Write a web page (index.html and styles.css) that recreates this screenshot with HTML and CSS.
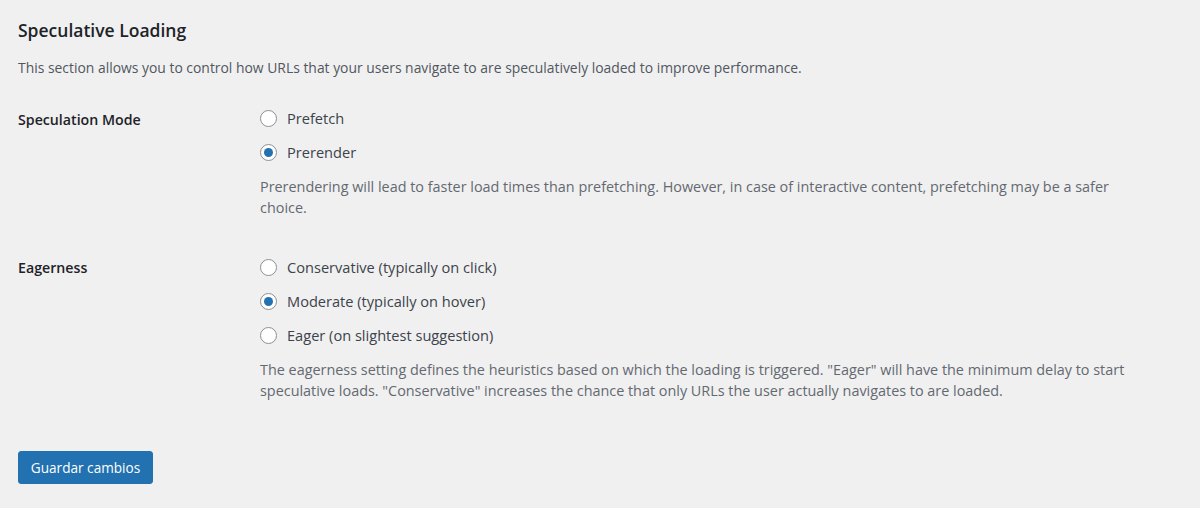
FILE: index.html
```html
<!DOCTYPE html>
<html lang="en">
<head>
<meta charset="utf-8">
<title>Speculative Loading</title>
<link rel="stylesheet" href="styles.css">
</head>
<body>
<div class="wrap">
  <h2 class="title">Speculative Loading</h2>
  <p class="intro">This section allows you to control how URLs that your users navigate to are speculatively loaded to improve performance.</p>

  <div class="form-row row-mode">
    <div class="label">Speculation Mode</div>
    <div class="field">
      <label class="opt"><span class="radio"></span>Prefetch</label>
      <label class="opt"><span class="radio checked"></span>Prerender</label>
      <p class="help">Prerendering will lead to faster load times than prefetching. However, in case of interactive content, prefetching may be a safer choice.</p>
    </div>
  </div>

  <div class="form-row row-eager">
    <div class="label">Eagerness</div>
    <div class="field">
      <label class="opt"><span class="radio"></span>Conservative (typically on click)</label>
      <label class="opt"><span class="radio checked"></span>Moderate (typically on hover)</label>
      <label class="opt"><span class="radio"></span>Eager (on slightest suggestion)</label>
      <p class="help">The eagerness setting defines the heuristics based on which the loading is triggered. "Eager" will have the minimum delay to start speculative loads. "Conservative" increases the chance that only URLs the user actually navigates to are loaded.</p>
    </div>
  </div>

  <div class="submit">
    <button class="button-primary" type="button">Guardar cambios</button>
  </div>
</div>
</body>
</html>
```

FILE: styles.css
```css
html, body {
  margin: 0;
  padding: 0;
  background: #f0f0f1;
}
body {
  font-family: "Open Sans", "Noto Sans", "Liberation Sans", sans-serif;
  font-size: 13.9px;
  color: #1d2327;
  width: 1200px;
  height: 508px;
  overflow: hidden;
}
.wrap {
  padding: 17px 0 0 18px;
}
.title {
  margin: 0;
  font-size: 17.5px;
  font-weight: 600;
  line-height: 26px;
  color: #1d2327;
}
.intro {
  margin: 15px 0 0;
  line-height: 20px;
  color: #50575e;
  font-size: 13.9px;
}
.form-row {
  display: grid;
  grid-template-columns: 242px 1fr;
}
.row-mode {
  margin-top: 30px;
}
.row-eager {
  margin-top: 39px;
}
.label {
  font-weight: 600;
  line-height: 20px;
  color: #1d2327;
  font-size: 14.2px;
}
.row-mode .label {
  padding-top: 2px;
}
.row-eager .label {
  padding-top: 1px;
}
.field {
  display: flex;
  flex-direction: column;
}
.opt {
  display: flex;
  align-items: center;
  height: 20px;
  margin-bottom: 14px;
  color: #3c434a;
  font-size: 14.6px;
}
.radio {
  width: 17px;
  height: 17px;
  box-sizing: border-box;
  border: 1px solid #8c8f94;
  border-radius: 50%;
  background: #fff;
  margin-right: 10px;
  display: inline-flex;
  align-items: center;
  justify-content: center;
  flex: none;
}
.radio.checked::before {
  content: "";
  width: 9px;
  height: 9px;
  border-radius: 50%;
  background: #2271b1;
}
.help {
  margin: 0;
  line-height: 21px;
  color: #646970;
  font-size: 14.4px;
  max-width: 875px;
}
.submit {
  margin-top: 50px;
}
.button-primary {
  font-family: inherit;
  font-size: 13.6px;
  color: #fff;
  background: #2271b1;
  border: 1px solid #2271b1;
  border-radius: 3px;
  height: 33px;
  width: 135px;
  padding: 0;
  cursor: pointer;
}
```
